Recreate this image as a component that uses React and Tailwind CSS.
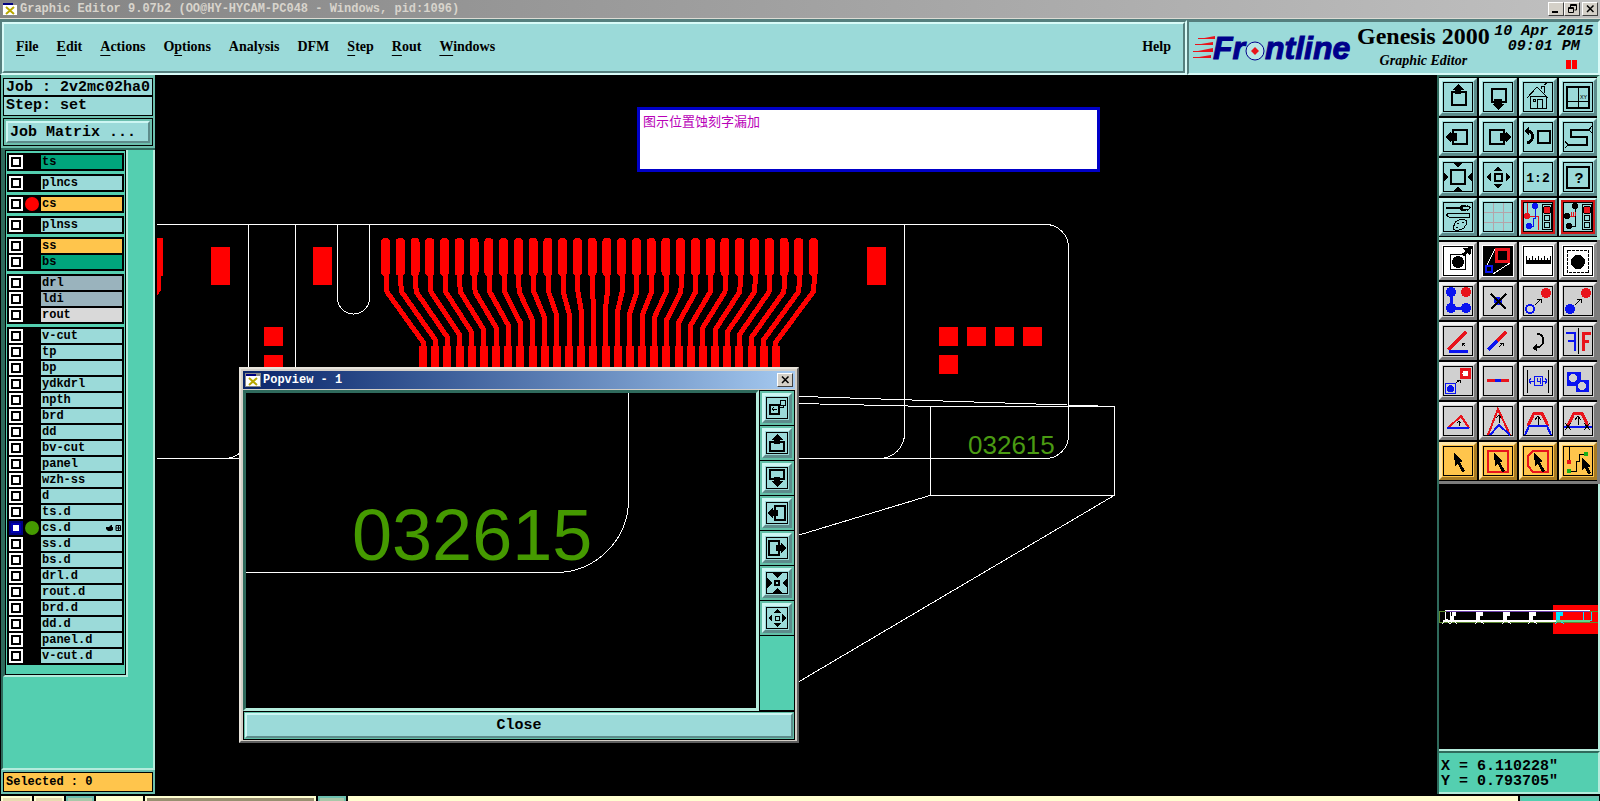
import React from 'react';
import { clsx } from 'clsx';

const MENUS = [
    ['', 'F', 'ile'],
    ['', 'E', 'dit'],
    ['', 'A', 'ctions'],
    ['O', 'p', 'tions'],
    ['Analysis', '', ''],
    ['DFM', '', ''],
    ['', 'S', 'tep'],
    ['', 'R', 'out'],
    ['', 'W', 'indows'],
];

const AQUA = 'bg-[#9bdad9]';
const GREEN = 'bg-[#00a57c]';
const AMBER = 'bg-[#ffc54c]';
const SLATE = 'bg-[#9ab3bd]';
const SILVER = 'bg-[#d9d9d9]';

// layers are boxed together by their type
const LAYER_GROUPS = [
    [['ts', GREEN]],
    [['plncs', AQUA]],
    [['cs', AMBER, 'bg-[#ff0000]']],
    [['plnss', AQUA]],
    [['ss', AMBER], ['bs', GREEN]],
    [['drl', SLATE], ['ldi', SLATE], ['rout', SILVER]],
    [
        ['v-cut', AQUA], ['tp', AQUA], ['bp', AQUA], ['ydkdrl', AQUA], ['npth', AQUA], ['brd', AQUA], ['dd', AQUA],
        ['bv-cut', AQUA], ['panel', AQUA], ['wzh-ss', AQUA], ['d', AQUA], ['ts.d', AQUA],
        ['cs.d', AQUA, 'bg-[#459a00]', true],
        ['ss.d', AQUA], ['bs.d', AQUA], ['drl.d', AQUA], ['rout.d', AQUA], ['brd.d', AQUA], ['dd.d', AQUA],
        ['panel.d', AQUA], ['v-cut.d', AQUA],
    ],
];

const RED = '#e8141c';
const BLUE = '#0a14f0';

const Box = ({ x, y, w, h = w, c = '#000', sw = 2, fill = 'none' }) => (
    <rect x={x + sw / 2} y={y + sw / 2} width={w - sw} height={h - sw} stroke={c} strokeWidth={sw} fill={fill} />
);
const Line = ({ d, c = '#000', w = 1 }) => <path d={d} stroke={c} strokeWidth={w} fill="none" />;
const Dot = ({ x, y, r = 4, c = BLUE }) => <circle cx={x} cy={y} r={r} fill={c} />;
const Cursor = () => <path d="M11 7L20 15L17 16L22 25L19 26L15 18L12 20Z" />;
const MiniArrow = () => <Line d="M12 19L18 13M14 13H18V17" />;
const UpArrow = ({ y = 10 }) => <Line d={`M15 ${y + 9}V${y}M12 ${y + 4}L15 ${y}L18 ${y + 4}`} />;
const Lamp = ({ off }) => (
    <>
        <Box x={19} y={2} w={10} h={26} sw={1} />
        <circle cx="24" cy="8" r="4" fill={RED} stroke="#000" />
        <circle cx="24" cy="16" r="3" fill={off} stroke="#000" />
        <circle cx="24" cy="23" r="3" fill={off} stroke="#000" />
    </>
);

const NAV_TOOLS = [
    ['Pan up', <><Box x={8} y={9} w={16} h={15} /><path d="M15 2L21 8H18V12H12V8H9Z" /></>],
    ['Pan down', <><Box x={8} y={6} w={16} h={15} /><path d="M15 28L21 22H19V17H11V22H9Z" /></>],
    ['Home', <>
        <Line d="M4 16L14 5L25 16M7 14V26H23V14M7 14H23M14 26V17H19V26M18 7V4H21V11" />
        <Box x={10} y={17} w={3} sw={1} />
        <Line d="M21 3L24 1" />
    </>],
    ['Zoom to X Y', <>
        <Box x={3} y={4} w={24} h={23} />
        <Line d="M15.5 4V27M4 19.5H26" />
        <text x="17" y="17" fontSize="6">XY</text>
    </>],
    ['Pan left', <><Box x={9} y={7} w={16} /><path d="M2 15L8 9V11H14V19H8V21Z" /></>],
    ['Pan right', <><Box x={6} y={7} w={16} /><path d="M28 15L23 9V11H17V19H23V21Z" /></>],
    ['Previous view', <><Box x={14} y={8} w={14} /><Line d="M5 9C11 9 11 20 4 21" w={3} /><path d="M1 9L6 4V14Z" /></>],
    ['Serpentine', <><Line d="M26 8H8V15H24V23H5" w={2} /><Line d="M26 8L29 4M26 8L29 11M5 23L2 19M5 23L2 26" /></>],
    ['Zoom out', <>
        <Box x={7} y={7} w={16} />
        <path d="M10 1H20L15 5ZM10 29H20L15 25ZM1 10V20L5 15ZM29 10V20L25 15Z" />
    </>],
    ['Zoom in', <>
        <Box x={11} y={11} w={9} />
        <path d="M15 5L20 9H10ZM15 26L20 22H10ZM4 15L8 10V20ZM27 15L23 10V20Z" />
    </>],
    ['Scale one to two', <text x="15" y="20" fontSize="13" textAnchor="middle" className="font-bold">1:2</text>],
    ['Help on item', <>
        <Box x={3} y={4} w={24} h={23} />
        <text x="16" y="21" fontSize="15" textAnchor="middle" className="font-bold">?</text>
    </>],
    ['Setup', <>
        <Line d="M3 6H18" w={2} />
        <path d="M18 3H22L24 5H20V7H24L22 9H18L16 7V5Z" />
        <path d="M24 3L28 5L24 9V7H26V5H24Z" />
        <Line d="M3 13L6 11H26V15H6Z" />
        <Line d="M12 21C14 17 23 16 24 20C24 24 21 23 21 26C18 29 10 29 10 26C10 23 12 24 12 21M14 21H16M19 20H21M13 25H15" />
    </>],
    ['Grid', <Line d="M10.5 1V29M20.5 1V29M1 10.5H29M1 20.5H29" c="#b5a3a8" />],
    ['Snap to net', <>
        <Line d="M4 1V14H15V28" c={RED} /><Line d="M12 4V16H10V24H6" c={BLUE} />
        <Dot x={12} y={4} r={3} /><Dot x={6} y={24} r={3} /><Dot x={4} y={14} r={3} c={RED} />
        <Lamp off="#9bdad9" />
    </>, 'red'],
    ['Net check', <>
        <Line d="M12 4V24H6" />
        <Line d="M6 14H12M8 10V14M10 10V14M12 10V14" c={RED} />
        <Dot x={12} y={4} r={3} c="#000" /><Dot x={6} y={24} r={3} c="#000" /><Dot x={4} y={14} r={3} c="#000" />
        <Lamp off="#9bdad9" />
    </>, 'red'],
];

const EDIT_TOOLS = [
    ['Feature select', <>
        <Box x={7} y={8} w={16} sw={1} /><Dot x={15} y={16} r={6} c="#000" />
        <Line d="M20 9L26 4" w={3} /><path d="M20 2L29 1L27 10Z" />
    </>, 'white'],
    ['Popview', <>
        <path d="M1 1H29V29H1Z" />
        <Line d="M4 19L12 3M10 28L27 17" c="#fff" />
        <Box x={12} y={2} w={15} c={RED} sw={3} /><Box x={2} y={19} w={8} c={BLUE} />
    </>, 'white'],
    ['Measure', <>
        <path d="M3 14H28V18H3Z" />
        <Line d="M3.5 10V15M6.5 12V15M9.5 10V15M12.5 12V15M15.5 10V15M18.5 12V15M21.5 10V15M24.5 12V15M27.5 10V15" />
    </>, 'white'],
    ['Reference', <>
        <rect x="4.5" y="4.5" width="21" height="22" fill="none" stroke="#000" strokeDasharray="3 1" />
        <Dot x={15} y={16} r={7} c="#000" />
    </>, 'white'],
    ['Connect', <><Line d="M8 6V22H22" c={BLUE} w={3} /><Dot x={8} y={6} r={5} /><Dot x={8} y={22} r={5} /><Dot x={23} y={22} r={5} /><Dot x={23} y={6} r={5} c={RED} /></>],
    ['Delete', <><Dot x={15} y={15} /><Line d="M8 8L23 23M23 8L8 23" w={2} /></>],
    ['Copy', <><circle cx="7" cy="23" r="4" fill="none" stroke={BLUE} strokeWidth="2" /><Dot x={23} y={7} r={5} c={RED} /><MiniArrow /></>],
    ['Move', <><Dot x={7} y={23} r={5} /><Dot x={23} y={7} r={5} c={RED} /><MiniArrow /></>],
    ['Rotate', <><Line d="M5 24L23 6" c={RED} w={3} /><Line d="M6 25H25" c={BLUE} w={3} /><Line d="M22 20L19 17M19 20V17H22" /></>],
    ['Extend', <><Line d="M5 24L14 15" c={BLUE} w={3} /><Line d="M14 15L23 6" c={RED} w={3} /><Line d="M16 21L20 17M17 17H20V20" /></>],
    ['Turn', <><Line d="M14 8C23 8 23 21 12 22" w={2} /><path d="M9 22L14 18V25Z" /></>],
    ['Mirror', <><Line d="M15.5 2V28" /><Line d="M3 7H12V25M5 15H12" c={BLUE} w={2} /><Line d="M28 7H20V25M26 15H20" c={RED} w={3} /></>],
    ['Change symbol', <>
        <Box x={17} y={2} w={11} c={RED} fill={RED} /><circle cx="22.5" cy="7.5" r="3" fill="#fff" />
        <Box x={2} y={17} w={11} c={BLUE} sw={1} /><Dot x={7.5} y={22.5} r={3.5} />
        <Line d="M13 17L17 14M14 14H17V17" />
    </>],
    ['Break', <><Line d="M4 14.5H26" c={RED} w={3} /><Line d="M12 14.5H18" c={BLUE} w={3} /></>],
    ['Resize', <>
        <Line d="M4.5 4V27M25.5 4V27" />
        <Box x={11} y={10} w={9} h={10} c={BLUE} sw={1} />
        <Line d="M6 15H11M20 15H24M8 12L6 15L8 18M22 12L24 15L22 18M14 12V15H18M17 12V18" c={BLUE} />
    </>],
    ['Surface', <>
        <path d="M4 6H18V14H26V26H13V20H4Z" fill={BLUE} />
        <circle cx="10" cy="12" r="4" fill="#d0d0d0" /><circle cx="19" cy="20" r="4" fill="#d0d0d0" />
    </>],
    ['Slide line', <><Line d="M5 22L18 10L26 22" c={RED} w={2} /><Line d="M4 22H26" c={BLUE} w={2} /><Line d="M16 20V15M14 17L16 15L18 17" /></>],
    ['Slide corner', <><Line d="M5 29L15 3L27 29" c={RED} w={2} /><Line d="M7 29L16 19L27 29" c={BLUE} w={2} /><Line d="M16 17V10M13 12L16 9L18 12" /></>],
    ['Slide lines', <><Line d="M5 20L11 7H19L25 20" c={RED} w={3} /><Line d="M2 29L6 20H24L28 29" c={BLUE} w={2} /><UpArrow /></>],
    ['Cut lines', <>
        <Line d="M5 20L11 7H19L25 20" c={RED} w={3} /><Line d="M1 20.5H29" c={BLUE} w={2} />
        <Line d="M2 17L8 24M8 17L2 24M21 17L27 24M27 17L21 24" /><UpArrow />
    </>],
    ['Pick', <Cursor />, 'amber'],
    ['Pick in box', <><Box x={4} y={4} w={22} h={23} c={RED} /><Cursor /></>, 'amber'],
    ['Pick in polygon', <><Line d="M10 5H25V26H10L5 20V10Z" c={RED} w={2} /><Cursor /></>, 'amber'],
    ['Pick net', <>
        <Line d="M6 1V16M24 8H16V15H13V25H6" />
        <Dot x={6} y={16} r={2.5} c={RED} /><Dot x={23} y={8} r={2.5} c="#18b018" /><Dot x={6} y={25} r={2.5} c="#18b018" />
        <path d="M19 12L28 20L25 21L28 27L25 28L22 22L19 24Z" />
    </>, 'amber'],
];

const POP_TOOLS = [
    ['Match main view', <><Box x={3} y={7} w={11} /><Box x={14} y={3} w={6} sw={1} /><Line d="M14 10H17V8M6 12H11M8 10L6 12L8 14" /></>],
    ['Popview up', <><Box x={3} y={9} w={16} h={11} /><path d="M11 2L17 8H14V12H8V8H5Z" /></>],
    ['Popview down', <><Box x={3} y={2} w={16} h={11} /><path d="M11 20L17 14H14V10H8V14H5Z" /></>],
    ['Popview left', <><Box x={8} y={3} w={12} h={16} /><path d="M2 11L7 5V8H12V14H7V17Z" /></>],
    ['Popview right', <><Box x={2} y={3} w={12} h={16} /><path d="M20 11L15 5V8H10V14H15V17Z" /></>],
    ['Popview zoom out', <><Box x={8} y={8} w={6} /><path d="M6 1H16L11 6ZM6 21H16L11 16ZM1 6V16L6 11ZM21 6V16L16 11Z" /></>],
    ['Popview zoom in', <><Box x={9} y={9} w={5} sw={1} /><path d="M11 2L15 6H7ZM11 20L15 16H7ZM2 11L6 7V15ZM20 11L16 7V15Z" /></>],
];

const TONES = {
    aqua: 'bg-[#9bdad9] border-t-[#cdf6f3] border-l-[#cdf6f3] border-r-[#5d8c8b] border-b-[#5d8c8b]',
    gray: 'bg-[#d0d0d0] border-t-[#f2f2f2] border-l-[#f2f2f2] border-r-[#7c7c7c] border-b-[#7c7c7c]',
    white: 'bg-white border-t-[#e6e6e6] border-l-[#e6e6e6] border-r-[#8c8c8c] border-b-[#8c8c8c]',
    amber: 'bg-[#ffc54c] border-t-[#ffe6a8] border-l-[#ffe6a8] border-r-[#a87c24] border-b-[#a87c24]',
};

const Tools = ({ items, tone }) => (
    <div className="grid grid-cols-4 gap-[2px] bg-black">
        {items.map(([label, icon, own]) => (
            <button key={label} aria-label={label} className={clsx('size-[38px] border-3 p-px', TONES[own] || TONES[tone])}>
                <svg
                    viewBox="0 0 30 30"
                    shapeRendering="crispEdges"
                    className={clsx("block size-[30px] font-['Liberation_Mono',monospace]", own === 'red' && 'outline-2 outline-[#d01818]')}
                >
                    <Box x={0} y={0} w={30} sw={1} />
                    {icon}
                </svg>
            </button>
        ))}
    </div>
);

const AppIcon = () => (
    <svg viewBox="0 0 16 14" className="h-[14px] w-[16px] shrink-0">
        <path d="M0 0H16V14H0Z" fill="#888" />
        <path d="M1 3H15V13H1Z" fill="#fff" />
        <path d="M1 1H11V3H1Z" fill="#000080" />
        <path d="M4 5L12 12M12 5L4 12" stroke="#b8a800" strokeWidth="2" />
    </svg>
);

const WinButton = ({ label, children }) => (
    <button aria-label={label} className="h-[14px] w-[16px] border border-t-white border-l-white border-r-[#404040] border-b-[#404040] bg-[#d4d0c8]">
        <svg viewBox="0 0 14 12" className="block h-[12px] w-[14px]" stroke="#000" fill="none">
            {children}
        </svg>
    </button>
);

const Cross = () => <path d="M4 2.5L10.5 9M10.5 2.5L4 9" strokeWidth="1.5" />;

const Logo = () => (
    <svg viewBox="0 -5 164 42" role="img" aria-label="Frontline" className="h-[42px] w-[164px] shrink-0">
        <path d="M6 7L22 4V7ZM2 13L20 10V13ZM0 20L20 16V20ZM0 26L18 23V26Z" fill={RED} />
        <path d="M5 6.5H22M2 12.5H20M0 19.5H20M0 25.5H18" stroke={RED} />
        <g fontSize="32" fill="#00008b" stroke="#00008b" className="font-['Liberation_Sans',sans-serif] font-bold italic">
            <text x="20" y="27">Fr</text>
            <text x="72" y="27">ntline</text>
        </g>
        <circle cx="62" cy="19" r="9" fill="#b8e6e6" stroke="#00008b" />
        <path d="M62 15L66 19L62 23L58 19Z" fill={RED} />
    </svg>
);

const Fingers = () => (
    <g fill="#ff0000">
        {Array.from({ length: 30 }, (_, i) => {
            const top = 381 + i * 14.76;
            const low = 419 + i * 12.17;
            const bend = 307 + (Math.abs(i - 14.5) / 14.5) * 35;
            return (
                <g key={i}>
                    <rect x={top} y="238" width="9" height="38" rx="4" />
                    <path
                        d={`M${top + 5} 270V284L${top + 6 - i / 15} 292L${low + 4} ${bend}V350`}
                        stroke="#ff0000" strokeWidth="5" fill="none"
                    />
                    <rect x={low} y="346" width="8" height="40" />
                </g>
            );
        })}
    </g>
);

const Board = () => (
    <svg className="absolute inset-0 h-full w-full" shapeRendering="crispEdges">
        <g transform="translate(-155 -75)">
            <g fill="none" stroke="#fff">
                <path d="M157 224.5H1046A23 23 0 0 1 1068.5 247V435A23 23 0 0 1 1046 458.5H157" />
                <path d="M248.5 224V435A24 24 0 0 1 225 458.5M295.5 224V458M904.5 224V433A25 25 0 0 1 880 458.5" />
                <path d="M337.5 224V298A16 16 0 0 0 369.5 298V224" />
                <path d="M243 391L930 406.5M756 395L1114 406.5M756 548L930 495.5M756 707L1114 495.5" />
                <path d="M930.5 406.5H1114.5V495.5H930.5Z" />
            </g>
            <Fingers />
            <path
                fill="#ff0000"
                d="M157 238H163V276H161V290L157 296ZM211 247H230V285H211ZM313 247H332V285H313ZM867 247H886V285H867ZM264 327H283V346H264ZM264 355H283V374H264ZM939 327H958V346H939ZM967 327H986V346H967ZM995 327H1014V346H995ZM1023 327H1042V346H1023ZM939 355H958V374H939Z"
            />
            <text x="968" y="454" fontSize="26" fill="#4a9a12" className="font-['Liberation_Sans',sans-serif]">032615</text>
        </g>
    </svg>
);

const Popview = () => (
    <section className="absolute top-[292px] left-[84px] flex h-[376px] w-[560px] flex-col border-2 border-t-[#e8e4dc] border-l-[#e8e4dc] border-r-[#606060] border-b-[#606060] bg-[#d4d0c8] p-[2px] pb-px">
        <header className="flex h-[18px] shrink-0 items-center gap-[2px] bg-linear-to-r from-[#0a246a] to-[#a6caf0] px-[2px] text-[12px] font-bold text-white">
            <AppIcon />
            <h2 className="flex-1">Popview - 1</h2>
            <WinButton label="Close Popview"><Cross /></WinButton>
        </header>
        <div className="mt-px flex min-h-0 flex-1 bg-black">
            <div className="relative flex-1 border-3 border-t-[#2f6a5c] border-l-[#2f6a5c] border-r-[#b4ecdc] border-b-[#b4ecdc]">
                <svg className="absolute inset-0 h-full w-full">
                    <path d="M0 179.5H309A73 73 0 0 0 382.5 106V0" fill="none" stroke="#fff" shapeRendering="crispEdges" />
                    <text x="106" y="167" fontSize="72" fill="#459a00" className="font-['Liberation_Sans',sans-serif]">032615</text>
                </svg>
            </div>
            <div className="flex w-[36px] flex-col gap-px bg-black p-px">
                {POP_TOOLS.map(([label, icon]) => (
                    <div key={label} className="bg-[#62c0a8] p-[2px]">
                        <button aria-label={label} className={clsx('block size-[30px] border-3 p-px', TONES.aqua)}>
                            <svg viewBox="0 0 22 22" shapeRendering="crispEdges" className="block size-[22px]">
                                <Box x={0} y={0} w={22} sw={1} />
                                {icon}
                            </svg>
                        </button>
                    </div>
                ))}
                <div className="flex-1 bg-[#54cfb0]" />
            </div>
        </div>
        <div className="border border-black bg-[#62c0a8] p-px">
            <button className={clsx('block h-[25px] w-full border-2 text-[15px] leading-[20px] font-bold', TONES.aqua)}>Close</button>
        </div>
    </section>
);

const Overview = () => (
    <div className="min-h-0 flex-1 border-r-2 border-b-2 border-[#b4ecdc] bg-black">
        <svg viewBox="1439 485 159 263" className="block w-full" shapeRendering="crispEdges">
            <path d="M1553 606H1598V635H1553Z" fill="#ff0000" />
            <path d="M1439 612.5H1598M1439 623.5H1598M1439.5 612V624" stroke="#5c8c30" />
            <path d="M1445 611.5H1590" stroke="#fff" />
            <path d="M1443 622H1556" stroke="#fff" strokeWidth="2" />
            <path d="M1446 612.5H1589" stroke="#7040b0" />
            <path d="M1445 613V620L1450 622V613" stroke="#fff" fill="none" />
            <path d="M1452 613H1456V617H1454V621H1451ZM1476 613H1483V617H1480V621H1476ZM1503 613H1510V617H1507V621H1503ZM1529 613H1536V617H1533V621H1529Z" fill="#fff" />
            <path d="M1442 625L1446 621L1450 625L1454 621L1457 625M1475 625L1479 621L1484 625M1502 625L1506 621L1511 625M1528 625L1532 621L1537 625" stroke="#fff" fill="none" />
            <path d="M1556 613H1563V617H1560V621H1556Z" fill="#00e8ff" />
            <path d="M1555 625L1559 621L1564 625M1583.5 613V622M1591.5 613V621L1588 623" stroke="#00e8ff" fill="none" />
            <path d="M1556 622H1590" stroke="#60d890" strokeWidth="2" />
        </svg>
    </div>
);

const LayerRow = ({ name, color, dot, active }) => (
    <label className="flex h-[14px]">
        <input
            type="checkbox"
            defaultChecked={active}
            className="size-[14px] shrink-0 appearance-none border-2 border-white bg-white shadow-[inset_0_0_0_2px_#000] checked:border-[#000080] checked:shadow-[inset_0_0_0_2px_#0000b0]"
        />
        <span className="flex w-[18px] shrink-0 items-center justify-center">
            {dot && <span className={clsx('size-[14px] rounded-full', dot)} />}
        </span>
        <span className={clsx('flex flex-1 items-center justify-between pr-px pl-px leading-[14px]', color)}>
            {name}
            {active && (
                <svg viewBox="0 0 16 8" className="h-[8px] w-[16px]">
                    <path d="M1 3H4L6 1H7V3H8V6L6 7H3L1 5Z" />
                    <path d="M11 1.5H15.5V6.5H11ZM13.5 1V7M11 4H16" fill="none" stroke="#000" />
                </svg>
            )}
        </span>
    </label>
);

const LayerPanel = () => (
    <aside className="ml-px flex w-[154px] shrink-0 flex-col bg-[#6cbfae] font-bold">
        <div className="flex flex-col gap-[2px] border-b-2 border-[#2f6a5c] p-[2px] pt-[3px] text-[15px] leading-[17px]">
            <dl className="border border-black bg-[#9bdad9] whitespace-pre">
                <div className="flex h-[18px] border-b-2 border-black px-[2px]"><dt>Job : </dt><dd>2v2mc02ha0</dd></div>
                <div className="flex h-[18px] px-[2px]"><dt>Step: </dt><dd>set</dd></div>
            </dl>
            <div className="border border-black p-[2px]">
                <button className={clsx('block h-[22px] w-full border-2 px-[2px] text-left', TONES.aqua)}>Job Matrix ...</button>
            </div>
        </div>
        <div className="flex-1 border-r-2 border-b-2 border-l-2 border-r-[#b4ecdc] border-b-[#b4ecdc] border-l-[#2f6a5c] bg-[#54cfb0] text-[12px]">
            <div className="w-[125px] border-r-2 border-b-2 border-l-2 border-r-[#b4ecdc] border-b-[#b4ecdc] border-l-[#2f6a5c]">
                <div className="flex flex-col gap-[3px] border border-black p-px pt-[2px] pb-[9px]">
                    {LAYER_GROUPS.map((group, i) => (
                        <div key={i} className="flex flex-col gap-[2px] bg-black p-[2px]">
                            {group.map(([name, color, dot, active]) => (
                                <LayerRow key={name} name={name} color={color} dot={dot} active={active} />
                            ))}
                        </div>
                    ))}
                </div>
            </div>
        </div>
        <p className="m-[2px] h-[20px] border border-black bg-[#ffc54c] px-[2px] text-[12px] leading-[18px]">Selected : 0</p>
    </aside>
);

const App = () => {
    return (
        <div className="flex h-screen flex-col overflow-hidden bg-black font-['Liberation_Mono',monospace] text-black">
            <header className="flex h-[18px] shrink-0 items-center gap-[2px] bg-linear-to-r from-[#848484] to-[#c0c0c0] px-[2px] text-[12px] font-bold text-[#d8d4cc]">
                <AppIcon />
                <h1 className="flex-1">Graphic Editor 9.07b2 (OO@HY-HYCAM-PC048 - Windows, pid:1096)</h1>
                <div className="flex">
                    <WinButton label="Minimize"><path d="M3 9H9" strokeWidth="2" /></WinButton>
                    <WinButton label="Restore"><path d="M5.5 4V1.5H11.5V7H9.5M3.5 4.5H8.5V9.5H3.5ZM5 2.5H12M3 5.5H9" /></WinButton>
                </div>
                <WinButton label="Close"><Cross /></WinButton>
            </header>

            {/* Menu bar and product banner */}
            <div className="flex h-[57px] shrink-0 border-t border-[#dcdcd4] bg-[#557f7e] font-['Liberation_Serif',serif] font-bold">
                <div className="mt-px flex-1 border-2 border-t-[#557f7e] border-l-[#557f7e] border-r-[#d8fbf8] border-b-[#d8fbf8]">
                    <nav className="flex h-full items-center border-2 border-t-[#d8fbf8] border-l-[#d8fbf8] border-r-[#557f7e] border-b-[#557f7e] bg-[#9bdad9] px-[12px] pb-[2px] text-[14px] leading-[18px]">
                        <div className="flex gap-[18px]">
                            {MENUS.map(([pre, key, rest]) => (
                                <button key={pre + key + rest}>
                                    {pre}<span className="underline underline-offset-4">{key}</span>{rest}
                                </button>
                            ))}
                        </div>
                        <button className="ml-auto">Help</button>
                    </nav>
                </div>
                <div className="mt-px flex w-[413px] shrink-0 items-center border-2 border-t-[#557f7e] border-l-[#557f7e] border-r-[#d8fbf8] border-b-[#d8fbf8] bg-[#9bdad9] pl-[4px]">
                    <Logo />
                    <div className="shrink-0 text-center">
                        <p className="text-[24px] leading-[26px]">Genesis 2000</p>
                        <p className="text-[14px] leading-[24px] italic">Graphic Editor</p>
                    </div>
                    <div className="flex-1 self-start pt-[2px] text-center font-['Liberation_Mono',monospace] text-[15px] leading-[15px] whitespace-nowrap italic">
                        <p>10 Apr 2015</p>
                        <p>09:01 PM</p>
                        <div className="mt-[6px] flex justify-end gap-[1px] pr-[21px]">
                            <span className="h-[9px] w-[5px] bg-[#ff0000]" />
                            <span className="h-[9px] w-[5px] bg-[#ff0000]" />
                        </div>
                    </div>
                </div>
            </div>

            <div className="flex min-h-0 flex-1">
                <LayerPanel />

                <main className="relative flex-1 bg-black">
                    <Board />
                    <p className="absolute top-[32px] left-[482px] h-[65px] w-[463px] border-3 border-[#0000c8] bg-white p-[3px] font-['Noto_Sans_CJK_SC',sans-serif] text-[13px] leading-[16px] text-[#b800b8]">
                        图示位置蚀刻字漏加
                    </p>
                    <Popview />
                </main>

                <aside className="flex w-[163px] shrink-0 flex-col border-l-2 border-[#2f6a5c]">
                    <div className="border-t-2 border-r-3 border-b-3 border-t-[#2f6a5c] border-r-[#b4ecdc] border-b-[#b4ecdc] pt-px pb-px">
                        <Tools items={NAV_TOOLS} tone="aqua" />
                    </div>
                    <div className="border-r-3 border-b-3 border-[#7c7c7c] pt-[2px] pb-px">
                        <Tools items={EDIT_TOOLS} tone="gray" />
                    </div>
                    <Overview />
                    <div className="h-[43px] border-t-2 border-r-2 border-b-2 border-t-[#2f6a5c] border-r-[#b4ecdc] border-b-[#b4ecdc] bg-[#54cfb0] px-[2px] pt-[6px] text-[15px] leading-[15px] font-bold">
                        <p>X = 6.110228"</p>
                        <p>Y = 0.793705"</p>
                    </div>
                </aside>
            </div>

            {/* Status strip */}
            <footer className="flex h-[7px] shrink-0 gap-[2px] border-t-2 border-black px-px">
                <div className="w-[31px] border-2 border-b-0 border-[#ffffd0] bg-[#e8dcb0]" />
                <div className="w-[30px] border-2 border-b-0 border-[#ffffd0] bg-[#e8dcb0]" />
                <div className="w-[28px] border-2 border-b-0 border-[#6cbfae] bg-[#a8c8a8]" />
                <div className="w-[47px] bg-[#ffffd0]" />
                <div className="w-[171px] border-2 border-b-0 border-[#ffffd0] bg-[#989070]" />
                <div className="w-[28px] border-2 border-b-0 border-[#6cbfae] bg-[#a8c8a8]" />
                <div className="flex-1 bg-[#ffffd0]" />
                <div className="w-[79px] border-2 border-b-0 border-[#6cbfae] bg-[#54cfb0]" />
            </footer>
        </div>
    );
};

export default App;
